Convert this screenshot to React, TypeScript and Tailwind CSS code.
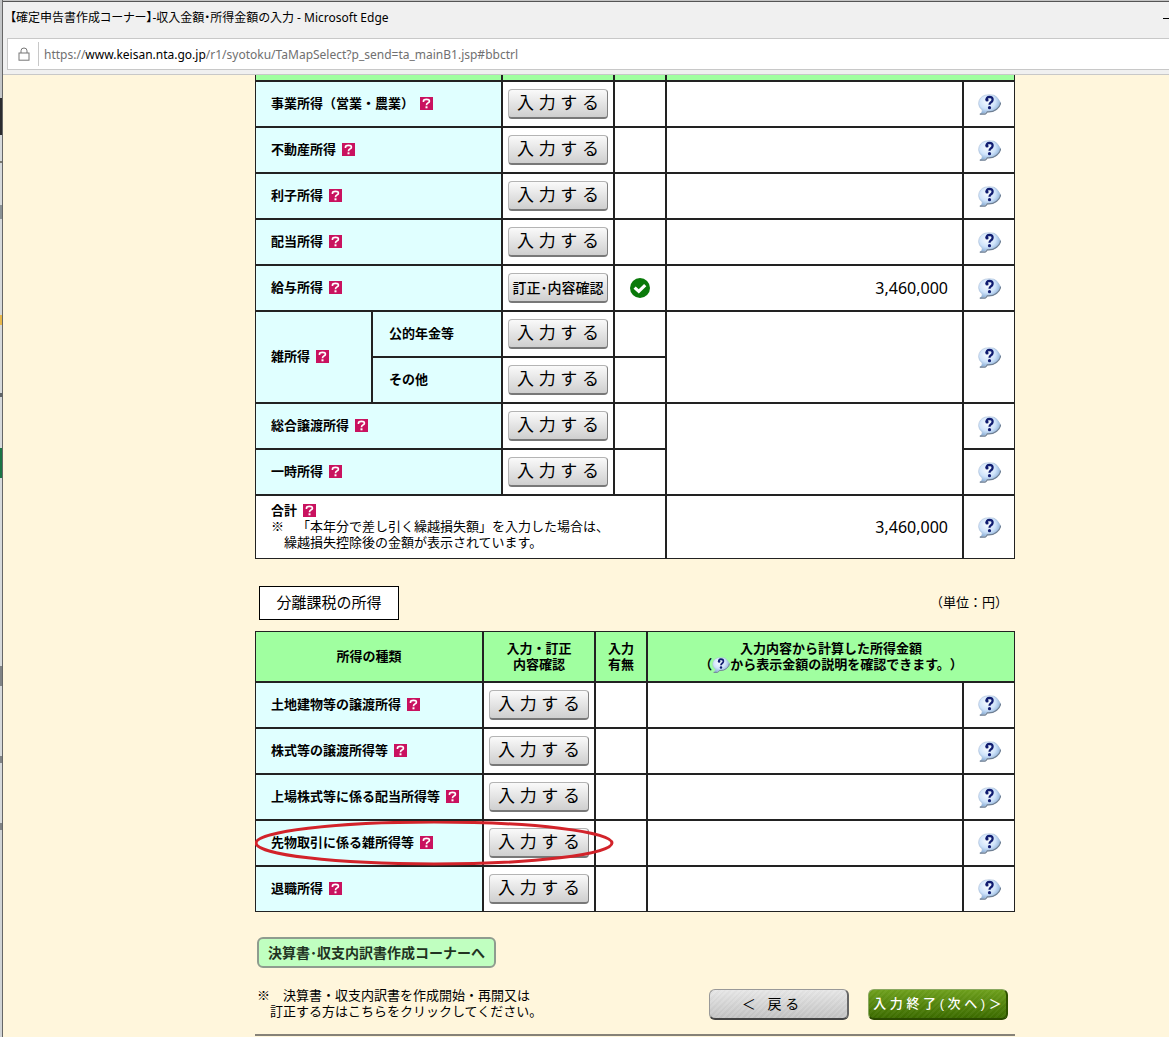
import {ReactNode} from 'react';

type IncomeRow = {label: string; done?: boolean; amount?: string; marked?: boolean};

const generalRows: IncomeRow[] = [
  {label: '事業所得（営業・農業）'},
  {label: '不動産所得'},
  {label: '利子所得'},
  {label: '配当所得'},
  {label: '給与所得', done: true, amount: '3,460,000'},
];

const separateRows: IncomeRow[] = [
  {label: '土地建物等の譲渡所得'},
  {label: '株式等の譲渡所得等'},
  {label: '上場株式等に係る配当所得等'},
  {label: '先物取引に係る雑所得等', marked: true},
  {label: '退職所得'},
];

// slivers of the window lying behind this one
const backdrop = [
  'h-[98px] bg-[#c4c6c8]',
  'h-[37px] bg-[#2b2b2f]',
  'h-[26px] bg-[#d6d9db]',
  'h-[2px] bg-[#77776f]',
  'h-[42px] bg-[#d6d9db]',
  'h-[14px] bg-[#8b9296]',
  'h-[96px] bg-[#d6d9db]',
  'h-[10px] bg-[#e8b84c]',
  'h-[68px] bg-[#d6d9db]',
  'h-[4px] bg-[#606468]',
  'h-[51px] bg-[#d6d9db]',
  'h-[30px] bg-[#1a7445]',
  'h-[188px] bg-[#d6d9db]',
  'h-[20px] bg-[#808386]',
  'h-[70px] bg-[#d6d9db]',
  'h-[7px] bg-[#808386]',
  'h-[60px] bg-[#d6d9db]',
  'h-[7px] bg-[#808386]',
  'grow bg-[#d0d3d5]',
];

const cell = 'border border-[#222] p-0';

const TermLink = () => (
  <a href="#term" aria-label="用語の説明" className="shrink-0 pb-[2px]">
    <svg width="13" height="13" viewBox="0 0 13 13">
      <rect width="13" height="13" fill="#c9125f" />
      <path d="M3.5 5V4Q3.5 2.3 6.5 2.3T9.4 4.3Q9.4 5.4 7.9 6Q6.5 6.6 6.5 8.2" fill="none" stroke="#fff" strokeWidth="1.7" />
      <rect x="5.5" y="9.3" width="2" height="2" fill="#fff" />
    </svg>
  </a>
);

const Balloon = ({className}: {className: string}) => (
  <svg viewBox="0 0 23 21" className={className}>
    <defs>
      <radialGradient id="balloon" cx="40%" cy="35%" r="68%">
        <stop offset="0" stopColor="#f8fcff" />
        <stop offset="0.55" stopColor="#cfe3fa" />
        <stop offset="1" stopColor="#7fa6d2" />
      </radialGradient>
    </defs>
    <path d="M7 1.2Q11 .2 16 1.2Q19 2 22.4 8.4Q22.8 10 21 12.6Q18.6 16.6 15 17.2Q12 17.8 9.4 17.6Q7.6 20 2 20.2Q4.6 18.4 4.2 16Q.6 13.4 .6 9.6Q1 3 7 1.2Z" fill="url(#balloon)" stroke="#a9bdd6" strokeWidth="0.6" />
    <path d="M1.8 20.2H7Q8.6 19.4 9.4 17.8Q15 18.2 18.6 15.2Q22.8 11.6 22.5 8.6" fill="none" stroke="#6f7f92" strokeWidth="1.2" />
    <path d="M8.6 6Q8.4 3 11.4 2.9Q14.8 2.9 14.6 5.8Q14.4 7.4 12.8 8.4Q11.6 9.2 11.5 10.8" fill="none" stroke="#101c70" strokeWidth="2.3" />
    <circle cx="9" cy="5.9" r="1.6" fill="#101c70" />
    <circle cx="11.5" cy="13.7" r="1.6" fill="#101c70" />
  </svg>
);

const Check = () => (
  <svg width="20" height="20" viewBox="0 0 20 20" role="img" aria-label="入力済" className="mx-auto block">
    <circle cx="10" cy="10" r="10" fill="#0a7a0a" />
    <path d="M4.6 9.6L8.8 13.4L15.2 7.2" fill="none" stroke="#fff" strokeWidth="3.2" />
  </svg>
);

const Label = ({children}: {children: ReactNode}) => (
  <span className="flex items-center gap-[6px] pl-[15px] font-bold whitespace-nowrap">
    {children}
    <TermLink />
  </span>
);

const InputCell = ({done}: {done?: boolean}) => (
  <>
    <td className={`${cell} bg-white`}>
      <button
        type="button"
        className={`mx-auto flex h-[30px] w-[100px] items-center justify-center rounded-[4px] border border-[#b4b4b4] border-r-[#808080] border-b-2 border-b-[#787878] bg-linear-to-b from-[#fafafa] to-[#cfcfcf] pt-px whitespace-nowrap ${done ? 'text-[14px] font-medium' : 'text-[17px]'}`}
      >
        {done ? '訂正･内容確認' : '入 力 す る'}
      </button>
    </td>
    <td className={`${cell} bg-white`}>{done && <Check />}</td>
  </>
);

const Amount = ({value, rowSpan}: {value?: string; rowSpan?: number}) => (
  <td rowSpan={rowSpan} className={`${cell} bg-white pr-[14px] text-right font-['Noto_Sans'] text-[16px]`}>
    {value}
  </td>
);

const Help = ({rowSpan}: {rowSpan?: number}) => (
  <td rowSpan={rowSpan} className={`${cell} bg-white`}>
    <a href="#help" aria-label="表示金額の説明" className="mx-auto block w-[23px]">
      <Balloon className="h-[21px] w-[23px]" />
    </a>
  </td>
);

const RowHead = ({children, colSpan, rowSpan, className = ''}: {children: ReactNode; colSpan?: number; rowSpan?: number; className?: string}) => (
  <th scope="row" colSpan={colSpan} rowSpan={rowSpan} className={`${cell} h-[46px] bg-[#e0ffff] text-left ${className}`}>
    {children}
  </th>
);

const GeneralTable = () => (
  <table className="w-full table-fixed border-separate border-spacing-0">
    <colgroup>
      <col className="w-[117px]" />
      <col className="w-[130px]" />
      <col className="w-[112px]" />
      <col className="w-[52px]" />
      <col />
      <col className="w-[52px]" />
    </colgroup>
    <tbody>
      <tr>
        <td colSpan={2} className={`${cell} h-[6px] border-t-0 bg-[#a0ffa0]`}></td>
        <td className={`${cell} border-t-0 bg-[#a0ffa0]`}></td>
        <td className={`${cell} border-t-0 bg-[#a0ffa0]`}></td>
        <td colSpan={2} className={`${cell} border-t-0 bg-[#a0ffa0]`}></td>
      </tr>
      {generalRows.map(row => (
        <tr key={row.label}>
          <RowHead colSpan={2}>
            <Label>{row.label}</Label>
          </RowHead>
          <InputCell done={row.done} />
          <Amount value={row.amount} />
          <Help />
        </tr>
      ))}
      <tr>
        <RowHead rowSpan={2}>
          <Label>雑所得</Label>
        </RowHead>
        <RowHead className="pl-4">公的年金等</RowHead>
        <InputCell />
        <Amount rowSpan={2} />
        <Help rowSpan={2} />
      </tr>
      <tr>
        <RowHead className="pl-4">その他</RowHead>
        <InputCell />
      </tr>
      <tr>
        <RowHead colSpan={2}>
          <Label>総合譲渡所得</Label>
        </RowHead>
        <InputCell />
        <Amount rowSpan={2} />
        <Help />
      </tr>
      <tr>
        <RowHead colSpan={2}>
          <Label>一時所得</Label>
        </RowHead>
        <InputCell />
        <Help />
      </tr>
      <tr>
        <td colSpan={4} className={`${cell} h-[64px] bg-white`}>
          <Label>合計</Label>
          <p className="pl-[28px] -indent-[13px]">※　「本年分で差し引く繰越損失額」を入力した場合は、</p>
          <p className="pl-[28px]">繰越損失控除後の金額が表示されています。</p>
        </td>
        <Amount value="3,460,000" />
        <Help />
      </tr>
    </tbody>
  </table>
);

const SeparateTable = () => (
  <table className="w-full table-fixed border-separate border-spacing-0">
    <colgroup>
      <col className="w-[228px]" />
      <col className="w-[112px]" />
      <col className="w-[52px]" />
      <col />
      <col className="w-[52px]" />
    </colgroup>
    <thead className="bg-[#a0ffa0]">
      <tr>
        <th className={`${cell} h-[51px]`}>所得の種類</th>
        <th className={cell}>
          入力・訂正
          <br />
          内容確認
        </th>
        <th className={cell}>
          入力
          <br />
          有無
        </th>
        <th colSpan={2} className={cell}>
          入力内容から計算した所得金額
          <span className="flex items-center justify-center">
            （<Balloon className="h-4 w-[18px]" />
            から表示金額の説明を確認できます。）
          </span>
        </th>
      </tr>
    </thead>
    <tbody>
      {separateRows.map(row => (
        <tr key={row.label}>
          <RowHead className={row.marked ? 'relative' : ''}>
            <Label>{row.label}</Label>
            {row.marked && (
              <svg width="360" height="46" className="pointer-events-none absolute top-0 -left-px z-10 max-w-none">
                <ellipse cx="179" cy="22" rx="178" ry="21" fill="none" stroke="#d2232a" strokeWidth="3" />
              </svg>
            )}
          </RowHead>
          <InputCell done={row.done} />
          <Amount value={row.amount} />
          <Help />
        </tr>
      ))}
    </tbody>
  </table>
);

const WindowBar = () => (
  <header className="border-t border-b border-t-[#555] border-b-[#c8c8c8] bg-[#f0f0f0] pb-1 font-['Noto_Sans','Noto_Sans_CJK_JP',sans-serif] text-[12px]">
    <div className="flex h-[36px] items-center justify-between pb-1 pl-[7px]">
      <h1 className="whitespace-nowrap [font-feature-settings:'palt']">【確定申告書作成コーナー】-収入金額・所得金額の入力 - Microsoft Edge</h1>
      <button type="button" aria-label="最小化" className="h-px w-[6px] bg-black"></button>
    </div>
    <div className="ml-1 flex h-[32px] items-center border border-r-0 border-[#c8c8c8] bg-white">
      <svg width="12" height="14" viewBox="0 0 12 14" fill="none" stroke="#777" className="mx-[10px] shrink-0">
        <rect x="1" y="6" width="10" height="7.2" />
        <path d="M3 6V3.8Q3 1 6 1T9 3.8V6" />
      </svg>
      <div className="mr-[5px] ml-[-2px] h-[24px] w-px bg-[#c8c8c8]"></div>
      <p className="pt-px text-[#707070]">
        https://<span className="text-black">www.keisan.nta.go.jp</span>/r1/syotoku/TaMapSelect?p_send=ta_mainB1.jsp#bbctrl
      </p>
    </div>
  </header>
);

const App = () => {
  return (
    <div className="flex min-h-screen bg-[#fff6dc] font-['Liberation_Sans','Noto_Sans_CJK_JP',sans-serif] text-[13px] leading-4 text-black [text-spacing-trim:space-all]">
      <div className="flex w-[3px] shrink-0 flex-col border-r border-[#666]">
        {backdrop.map((shade, i) => (
          <div key={i} className={shade}></div>
        ))}
      </div>
      <div className="min-w-0 grow border-t border-[#c4c4c4]">
        <WindowBar />
        <main className="ml-[252px] max-w-[760px]">
          <GeneralTable />

          <div className="mt-[27px] mb-[11px] ml-1 flex items-center justify-between">
            <h2 className="flex h-[34px] w-[140px] items-center justify-center border border-black bg-white text-[15px]">分離課税の所得</h2>
            <p className="pr-[7px]">（単位：円）</p>
          </div>

          <SeparateTable />

          <div className="mt-[25px] flex items-end justify-between pr-[7px] pl-[2px]">
            <div>
              <button
                type="button"
                className="flex h-[31px] w-[239px] items-center justify-center rounded-[6px] border-2 border-[#8f9c8f] bg-[#c0ffc0] text-[14px] font-bold whitespace-nowrap text-[#223322]"
              >
                決算書･収支内訳書作成コーナーへ
              </button>
              <p className="mt-[20px] pl-[13px] -indent-[13px]">※　決算書・収支内訳書を作成開始・再開又は</p>
              <p className="pl-[13px]">訂正する方はこちらをクリックしてください。</p>
            </div>
            <div className="flex gap-[19px]">
              <button
                type="button"
                className="h-[31px] w-[140px] rounded-[6px] border border-[#999] border-r-2 border-r-[#666] border-b-2 border-b-[#444] bg-[repeating-linear-gradient(135deg,#ffffff18_0_2px,#00000003_2px_4px),linear-gradient(#e6e6e6,#c2c2c2)] pr-4 text-[14px]"
              >
                ＜{'\u00a0\u00a0'} 戻 る
              </button>
              <button
                type="button"
                className="h-[31px] w-[140px] rounded-[6px] border border-[#8aa860] border-r-2 border-r-[#2f5200] border-b-2 border-b-[#2a4a00] bg-[repeating-linear-gradient(135deg,#ffffff0a_0_2px,#00000004_2px_4px),linear-gradient(#6ea01c,#3c6c00)] text-[13px] font-medium whitespace-nowrap text-white"
              >
                入 力 終 了 ( 次 へ ) ＞
              </button>
            </div>
          </div>
          <hr className="mt-[14px] border-t-2 border-[#868278]" />
        </main>
      </div>
    </div>
  );
};

export default App;
